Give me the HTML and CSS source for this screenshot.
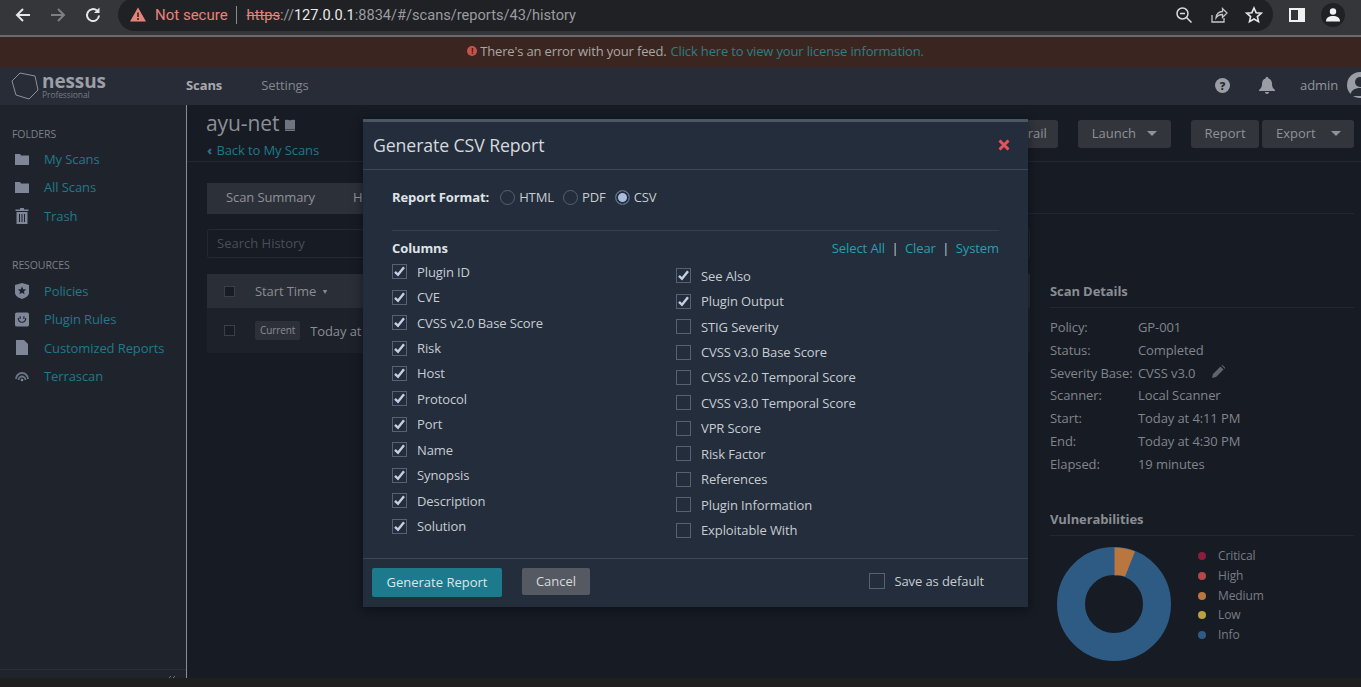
FILE: index.html

```html
<!DOCTYPE html>
<html lang="en">
<head>
  <meta charset="UTF-8">
  <title>Nessus - Scan History</title>
  <link rel="stylesheet" href="styles.css">
</head>
<body>
  <svg class="defs" width="0" height="0">
    <symbol id="tick" viewBox="0 0 15 15"><path d="M3 7.8l3 3 6-7.6" fill="none" stroke="#c3cfe6" stroke-width="2.4"/></symbol>
    <symbol id="folder" viewBox="0 0 14 12"><path d="M0 2.4V1h5l1 1.4h8V12H0z" fill="#7e8698"/></symbol>
  </svg>

  <div class="chrome">
    <svg class="chrome-icon" width="18" height="18" viewBox="0 0 18 18"><path d="M16 9H3M9 3L3 9l6 6" fill="none" stroke="#e4e6e8" stroke-width="2"/></svg>
    <svg class="chrome-icon" width="18" height="18" viewBox="0 0 18 18"><path d="M2 9h13M9 3l6 6-6 6" fill="none" stroke="#7d7f83" stroke-width="2"/></svg>
    <svg class="chrome-icon" width="18" height="18" viewBox="0 0 18 18"><path d="M15 9.5A6 6 0 1 1 13 4.6" fill="none" stroke="#e4e6e8" stroke-width="2"/><path d="M15.5 1.5V7h-5.5z" fill="#e4e6e8"/></svg>
    <div class="omnibox">
      <svg width="16" height="15" viewBox="0 0 16 15"><path d="M8 .5l8 14H0z" fill="#e8837a"/><path d="M8 5.5v4.5M8 11v2" stroke="#202124" stroke-width="1.5"/></svg>
      <span class="not-secure">Not secure</span>
      <span class="url"><s>https</s>://<b>127.0.0.1</b>:8834/#/scans/reports/43/history</span>
      <span class="omni-icons">
        <svg width="18" height="18" viewBox="0 0 18 18"><circle cx="7.5" cy="7.5" r="5.5" fill="none" stroke="#d8dadc" stroke-width="1.5"/><path d="M5 7.5h5M11.5 11.5l5 5" stroke="#d8dadc" stroke-width="1.5"/></svg>
        <svg width="18" height="18" viewBox="0 0 18 18"><path d="M2 9v7h12v-4M6 12c0-4 3-6.5 6.5-6.5V2.500L17 7l-4.500 4.500v-3C9.500 8.500 7.500 9.500 6 12z" fill="none" stroke="#c4c6c8" stroke-width="1.3"/></svg>
        <svg width="18" height="18" viewBox="0 0 18 18"><path d="M9 2l2.1 4.7 5.1.5-3.8 3.4 1.1 5L9 13l-4.5 2.6 1.100-5-3.800-3.400 5.100-.5z" fill="none" stroke="#e4e6e8" stroke-width="1.6"/></svg>
      </span>
    </div>
    <svg class="side-panel" width="16" height="16" viewBox="0 0 16 16"><path d="M0 1h16v14H0z" fill="#f0f1f2"/><path d="M2 3h7v10H2z" fill="#35363a"/></svg>
    <span class="profile"><svg width="14" height="14" viewBox="0 0 14 14"><circle cx="7" cy="3.5" r="3.2" fill="#f2f2f2"/><path d="M0 13.5c0-4 3-5.5 7-5.5s7 1.5 7 5.5z" fill="#f2f2f2"/></svg></span>
  </div>

  <div class="banner">
    <span class="banner-dot">!</span>
    <span>There's an error with your feed.</span>
    <a href="#">Click here to view your license information.</a>
  </div>

  <nav class="topnav">
    <div class="logo">
      <svg width="28" height="30" viewBox="0 0 28 30"><path d="M9 2l15 3 3 14-9 9-13-4L1 10z" fill="none" stroke="#8b9099" stroke-width="1"/></svg>
      <div class="logo-text">
        <span class="logo-name">nessus</span>
        <span class="logo-sub">Professional</span>
      </div>
    </div>
    <a class="nav-link active" href="#">Scans</a>
    <a class="nav-link" href="#">Settings</a>
    <div class="nav-right">
      <span class="help">?</span>
      <svg class="bell" width="16" height="17" viewBox="0 0 16 17"><path d="M8 0c1 0 1.500.7 1.500 1.500C12 2.300 13 4.500 13 7c0 3 1 4.500 3 6v1H0v-1c2-1.500 3-3 3-6 0-2.500 1-4.700 3.500-5.500C6.500.7 7 0 8 0zM6 15h4c0 1.200-1 2-2 2s-2-.8-2-2z" fill="#9a9ea4"/></svg>
      <span class="user">admin</span>
      <span class="avatar"><svg width="26" height="26" viewBox="0 0 26 26"><circle cx="13" cy="10" r="5" fill="#272c36"/><path d="M3 24c1-6 5-8 10-8s9 2 10 8z" fill="#272c36"/></svg></span>
    </div>
  </nav>

  <div class="app">
    <aside class="sidebar">
      <h4 class="side-title">Folders</h4>
      <a class="side-link" href="#"><svg width="14" height="12"><use href="#folder"/></svg>My Scans</a>
      <a class="side-link" href="#"><svg width="14" height="12"><use href="#folder"/></svg>All Scans</a>
      <a class="side-link" href="#"><svg width="14" height="16" viewBox="0 0 14 16"><path d="M5 0h4v1.5h4.500V3H.5V1.500H5zM1.500 4h11v12h-11z" fill="#7e8698"/><path d="M4.500 6v8M7 6v8M9.500 6v8" stroke="#1f232c"/></svg>Trash</a>

      <h4 class="side-title second">Resources</h4>
      <a class="side-link" href="#"><svg width="14" height="16" viewBox="0 0 14 16"><path d="M7 0l7 2v8c0 3-4 5-7 6-3-1-7-3-7-6V2z" fill="#7e8698"/><path d="M7 3.500l1.200 2.700 2.900.3-2.200 1.900.7 2.900L7 9.800l-2.600 1.500.7-2.900-2.200-1.900 2.900-.3z" fill="#1f232c"/></svg>Policies</a>
      <a class="side-link" href="#"><svg width="15" height="15" viewBox="0 0 15 15"><rect width="15" height="15" rx="2" fill="#7e8698"/><path d="M3.500 6c0 6 8 6 8 0" fill="none" stroke="#1f232c" stroke-width="1.200"/><path d="M5.500 4v3M9.500 4v3" stroke="#1f232c" stroke-width="1.200"/></svg>Plugin Rules</a>
      <a class="side-link" href="#"><svg width="12" height="15" viewBox="0 0 12 15"><path d="M0 0h8l4 4v11H0z" fill="#7e8698"/></svg>Customized Reports</a>
      <a class="side-link" href="#"><svg width="14" height="14" viewBox="0 0 14 14"><path d="M1 10a6 6 0 1 1 12 0M3.500 11a3.500 3.500 0 1 1 7 0" fill="none" stroke="#6d7484" stroke-width="1.800"/><circle cx="7" cy="11" r="1.300" fill="#7e8698"/></svg>Terrascan</a>
      <div class="side-foot"><svg width="9" height="6" viewBox="0 0 9 6"><path d="M4 0L1 3l3 3M8 0L5 3l3 3" fill="none" stroke="#6f7278"/></svg></div>
    </aside>

    <main class="main">
      <header class="page-head">
        <div>
          <h1 class="scan-name">ayu-net <svg width="12" height="12" viewBox="0 0 12 12"><path d="M1 1c2-.6 4-.4 5 .5 1-.9 3-1.100 5-.5v9H1z" fill="#6f7480"/><path d="M1 10.500h10V12H1z" fill="#6f7480"/></svg></h1>
          <a class="back" href="#"><span class="back-mark">‹</span> Back to My Scans</a>
        </div>
        <div class="actions">
          <button class="btn audit">Audit Trail</button>
          <button class="btn launch">Launch <i class="caret"></i></button>
          <div class="btn-pair">
            <button class="btn report">Report</button>
            <button class="btn export">Export <i class="caret"></i></button>
          </div>
        </div>
      </header>

      <div class="tabs">
        <a class="tab" href="#">Scan Summary</a>
        <a class="tab" href="#">H</a>
      </div>

      <div class="columns">
        <section class="history">
          <input class="search" type="text" placeholder="Search History">
          <div class="table">
            <div class="thead">
              <span class="cell-box"></span>
              <span>Start Time <small>▼</small></span>
            </div>
            <div class="trow">
              <span class="cell-box"></span>
              <span class="tag">Current</span>
              <span>Today at</span>
            </div>
          </div>
        </section>

        <aside class="details">
          <h3 class="details-title">Scan Details</h3>
          <dl class="info">
            <dt>Policy:</dt><dd>GP-001</dd>
            <dt>Status:</dt><dd>Completed</dd>
            <dt>Severity Base:</dt>
            <dd>CVSS v3.0 <svg class="pencil" width="13" height="13" viewBox="0 0 13 13"><path d="M0 13l1-4 7.500-7.500 3 3L4 12zM9.500.5l1-.5 3 3-.5 1z" fill="#5f6570"/></svg></dd>
            <dt>Scanner:</dt><dd>Local Scanner</dd>
            <dt>Start:</dt><dd>Today at 4:11 PM</dd>
            <dt>End:</dt><dd>Today at 4:30 PM</dd>
            <dt>Elapsed:</dt><dd>19 minutes</dd>
          </dl>

          <h3 class="details-title vuln">Vulnerabilities</h3>
          <div class="chart">
            <svg width="114" height="114" viewBox="0 0 114 114">
              <circle cx="57" cy="57" r="43" fill="none" stroke="#2d5b84" stroke-width="28"/>
              <path d="M57.500 0.500A56.500 56.500 0 0 1 78 4.500L68 29.500A28 28 0 0 0 57.500 28.500z" fill="#b9773f"/>
            </svg>
            <ul class="legend">
              <li><i class="dot critical"></i>Critical</li>
              <li><i class="dot high"></i>High</li>
              <li><i class="dot medium"></i>Medium</li>
              <li><i class="dot low"></i>Low</li>
              <li><i class="dot info-dot"></i>Info</li>
            </ul>
          </div>
        </aside>
      </div>
    </main>
  </div>
  <div class="bottom-strip"></div>

  <div class="modal">
    <div class="modal-head">
      <h2>Generate CSV Report</h2>
      <svg width="12" height="12" viewBox="0 0 12 12"><path d="M1.500 1.500l9 9M10.500 1.500l-9 9" stroke="#e8505b" stroke-width="3"/></svg>
    </div>
    <div class="modal-body">
      <div class="format-row">
        <span class="format-label">Report Format:</span>
        <label class="radio"><i></i>HTML</label>
        <label class="radio"><i></i>PDF</label>
        <label class="radio on"><i></i>CSV</label>
      </div>
      <div class="col-head">
        <strong>Columns</strong>
        <span class="col-links"><a href="#">Select All</a><em>|</em><a href="#">Clear</a><em>|</em><a href="#">System</a></span>
      </div>
      <div class="col-lists">
        <ul class="col-list left">
          <li><span class="box"><svg width="15" height="15"><use href="#tick"/></svg></span>Plugin ID</li>
          <li><span class="box"><svg width="15" height="15"><use href="#tick"/></svg></span>CVE</li>
          <li><span class="box"><svg width="15" height="15"><use href="#tick"/></svg></span>CVSS v2.0 Base Score</li>
          <li><span class="box"><svg width="15" height="15"><use href="#tick"/></svg></span>Risk</li>
          <li><span class="box"><svg width="15" height="15"><use href="#tick"/></svg></span>Host</li>
          <li><span class="box"><svg width="15" height="15"><use href="#tick"/></svg></span>Protocol</li>
          <li><span class="box"><svg width="15" height="15"><use href="#tick"/></svg></span>Port</li>
          <li><span class="box"><svg width="15" height="15"><use href="#tick"/></svg></span>Name</li>
          <li><span class="box"><svg width="15" height="15"><use href="#tick"/></svg></span>Synopsis</li>
          <li><span class="box"><svg width="15" height="15"><use href="#tick"/></svg></span>Description</li>
          <li><span class="box"><svg width="15" height="15"><use href="#tick"/></svg></span>Solution</li>
        </ul>
        <ul class="col-list right">
          <li><span class="box"><svg width="15" height="15"><use href="#tick"/></svg></span>See Also</li>
          <li><span class="box"><svg width="15" height="15"><use href="#tick"/></svg></span>Plugin Output</li>
          <li><span class="box"></span>STIG Severity</li>
          <li><span class="box"></span>CVSS v3.0 Base Score</li>
          <li><span class="box"></span>CVSS v2.0 Temporal Score</li>
          <li><span class="box"></span>CVSS v3.0 Temporal Score</li>
          <li><span class="box"></span>VPR Score</li>
          <li><span class="box"></span>Risk Factor</li>
          <li><span class="box"></span>References</li>
          <li><span class="box"></span>Plugin Information</li>
          <li><span class="box"></span>Exploitable With</li>
        </ul>
      </div>
    </div>
    <div class="modal-foot">
      <button class="btn-primary">Generate Report</button>
      <button class="btn-cancel">Cancel</button>
      <label class="save-default"><span class="box"></span>Save as default</label>
    </div>
  </div>
</body>
</html>
```

FILE: styles.css

```css
* {
  box-sizing: border-box;
}

body {
  margin: 0;
  height: 687px;
  overflow: hidden;
  position: relative;
  font-family: "Open Sans", "Liberation Sans", sans-serif;
  font-size: 13px;
  letter-spacing: -.1px;
  background: #161b24;
  color: #8f939a;
}

a {
  text-decoration: none;
}

ul {
  list-style: none;
  margin: 0;
  padding: 0;
}

.defs {
  position: absolute;
}

/* browser bar */
.chrome {
  height: 37px;
  display: flex;
  align-items: flex-start;
  padding-left: 14px;
  background: #35363a;
  border-bottom: 2px solid #6b6b6b;
  overflow: hidden;
}

.chrome-icon {
  margin: 6px 17px 0 0;
}

.omnibox {
  width: 1155px;
  height: 33px;
  margin: -2px 0 0 -1px;
  padding: 0 10px 0 12px;
  display: flex;
  align-items: center;
  border-radius: 17px;
  background: #202124;
  letter-spacing: 0;
}

.not-secure {
  margin-left: 9px;
  padding-right: 8px;
  border-right: 1px solid #8a8b8d;
  color: #e8837a;
  font-family: "Roboto", sans-serif;
  font-size: 15px;
  line-height: 18px;
}

.url {
  margin-left: 10px;
  color: #9a9ca0;
  font-family: "Roboto", sans-serif;
  font-size: 14.6px;
}

.url s {
  color: #e8837a;
}

.url b {
  color: #e8eaed;
  font-weight: 400;
}

.omni-icons {
  margin-left: auto;
  display: flex;
  gap: 17px;
}

.side-panel {
  margin: 7px 0 0 16px;
}

.profile {
  width: 24px;
  height: 24px;
  margin: 3px 0 0 16px;
  display: flex;
  align-items: center;
  justify-content: center;
  border-radius: 50%;
  background: #202124;
}

/* feed warning */
.banner {
  height: 30px;
  padding: 0 0 2px 30px;
  display: flex;
  align-items: center;
  justify-content: center;
  gap: 4px;
  background: #3a2520;
  color: #a9a7a4;
  font-size: 13px;
  letter-spacing: -.15px;
}

.banner a {
  color: #2b8085;
}

.banner-dot {
  width: 10px;
  height: 10px;
  margin-right: -1px;
  border-radius: 50%;
  background: #c9524a;
  color: #3a2520;
  font-size: 9px;
  font-weight: 700;
  line-height: 10px;
  text-align: center;
}

/* nessus nav */
.topnav {
  height: 38px;
  padding-left: 11px;
  display: flex;
  align-items: center;
  background: #272c36;
  overflow: hidden;
}

.logo {
  width: 175px;
  display: flex;
  align-items: center;
  gap: 3px;
}

.logo-text {
  display: flex;
  flex-direction: column;
}

.logo-name {
  color: #9b9fa6;
  font-size: 19px;
  font-weight: 700;
  line-height: 17px;
}

.logo-sub {
  color: #777b83;
  font-size: 8.5px;
  line-height: 10px;
}

.nav-link {
  margin: 0 39px 2px 0;
  color: #83878e;
  font-size: 13px;
}

.nav-link.active {
  color: #a6a9ae;
  font-weight: 700;
}

.nav-right {
  margin: 0 0 2px auto;
  display: flex;
  align-items: center;
}

.help {
  width: 15px;
  height: 15px;
  border-radius: 50%;
  background: #9a9ea4;
  color: #272c36;
  font-size: 11px;
  font-weight: 800;
  line-height: 15px;
  text-align: center;
}

.bell {
  margin-left: 29px;
}

.user {
  margin-left: 25px;
  color: #92969c;
  font-size: 13px;
}

.avatar {
  width: 26px;
  height: 26px;
  margin: 0 -12px 0 9px;
  border-radius: 50%;
  background: #9a9ea4;
}

/* page body */
.app {
  height: 573px;
  display: flex;
}

.sidebar {
  width: 187px;
  flex: none;
  position: relative;
  padding-top: 22px;
  background: #1f232c;
  border-right: 1px solid #8a8d92;
}

.side-title {
  margin: 0 0 4px 12px;
  color: #7c8087;
  font-size: 10.5px;
  font-weight: 400;
  line-height: 14px;
  text-transform: uppercase;
}

.side-title.second {
  margin: 28px 0 5px 12px;
}

.side-link {
  height: 28.3px;
  display: flex;
  align-items: center;
  color: #21798a;
}

.side-link svg {
  width: 14px;
  margin: 0 15px;
}

.side-foot {
  position: absolute;
  left: 0;
  right: 0;
  bottom: 0;
  height: 9px;
  padding: 6px 10px 0 0;
  border-top: 1px solid #2a2f38;
  overflow: hidden;
  text-align: right;
}

.side-foot svg {
  display: inline-block;
  vertical-align: top;
}

.main {
  flex: 1;
  min-width: 0;
}

.page-head {
  height: 57px;
  padding: 5px 7px 0 19px;
  display: flex;
  justify-content: space-between;
  border-bottom: 1px solid #222732;
}

.scan-name {
  margin: 0;
  color: #8d9096;
  font-size: 21px;
  font-weight: 400;
  line-height: 26px;
}

.scan-name svg {
  margin-left: -1px;
}

.back {
  display: block;
  margin-top: 5px;
  padding-left: 1px;
  color: #21798a;
  font-size: 13px;
}

.back-mark {
  margin-right: 1px;
  font-weight: 800;
}

.actions {
  display: flex;
  align-items: flex-start;
  gap: 20px;
  padding-top: 10px;
}

.btn {
  height: 28px;
  padding: 0 0 2px;
  border: 0;
  border-radius: 3px;
  background: #32353c;
  color: #8f9298;
  font: 13px "Open Sans", sans-serif;
  white-space: nowrap;
}

.btn-pair {
  display: flex;
  gap: 3px;
}

.audit {
  width: 90px;
  padding-left: 6px;
}

.launch {
  width: 93px;
}

.report {
  width: 68px;
}

.export {
  width: 92px;
  padding-left: 14px;
  text-align: left;
}

.caret {
  display: inline-block;
  margin: 0 0 2px 8px;
  border: 5px solid transparent;
  border-top-color: #8f9298;
  border-bottom: 0;
}

.export .caret {
  margin-left: 12px;
}

.tabs {
  height: 52px;
  margin: 0 7px 0 20px;
  padding-top: 21px;
  display: flex;
  border-bottom: 1px solid #222732;
}

.tab {
  height: 31px;
  padding: 0 19px;
  background: #2c3038;
  color: #8f9298;
  line-height: 29px;
}

.tab + .tab {
  flex: 0 0 686px;
}

.columns {
  display: flex;
  margin-left: 20px;
}

.history {
  width: 823px;
  flex: none;
  padding-top: 15px;
}

.search {
  width: 100%;
  height: 29px;
  padding: 0 9px 2px;
  border: 1px solid #232832;
  border-radius: 2px;
  background: transparent;
  font: 13px "Open Sans", sans-serif;
}

.search::placeholder {
  color: #4a4e56;
}

.table {
  margin-top: 16px;
}

.thead,
.trow {
  display: flex;
  align-items: center;
  padding-left: 17px;
  color: #8a8d93;
}

.thead {
  height: 34px;
  background: #2a2e37;
}

.thead small {
  font-size: 7px;
  vertical-align: 2px;
  margin-left: 2px;
}

.trow {
  height: 45px;
  background: #1c212a;
}

.cell-box {
  width: 11px;
  height: 11px;
  margin-right: 20px;
  border: 1px solid #3a3f49;
  background: #181c25;
}

.tag {
  height: 19px;
  margin-right: 10px;
  padding: 0 5px;
  border-radius: 2px;
  background: #2c3038;
  font-size: 10px;
  line-height: 18px;
}

.details {
  width: 304px;
  margin-left: 20px;
  padding-top: 68px;
}

.details-title {
  margin: 0 0 8px;
  padding-bottom: 7px;
  border-bottom: 1px solid #222732;
  color: #8a8d93;
  font-size: 13px;
  font-weight: 700;
  line-height: 18px;
}

.info {
  display: grid;
  grid-template-columns: 88px 1fr;
  grid-auto-rows: 22.8px;
  margin: 0;
  color: #81858b;
  line-height: 22px;
}

.info dd {
  margin: 0;
}

.pencil {
  margin-left: 13px;
}

.vuln {
  margin-top: 34px;
}

.chart {
  display: flex;
  margin: 11px 0 0 7px;
  gap: 27px;
}

.legend {
  color: #797d84;
  font-size: 12px;
}

.legend li {
  height: 19.6px;
  display: flex;
  align-items: center;
  line-height: 18px;
}

.dot {
  width: 8px;
  height: 8px;
  margin-right: 12px;
  border-radius: 50%;
}

.critical { background: #8c1d3c; }
.high { background: #b4474a; }
.medium { background: #b9773f; }
.low { background: #b9a23f; }
.info-dot { background: #2d5b84; }

.bottom-strip {
  height: 9px;
  background: #1f1f1f;
}

/* dialog */
.modal {
  position: absolute;
  left: 363px;
  top: 119px;
  width: 665px;
  height: 488px;
  border-top: 3px solid #4a5666;
  background: #232d3b;
  box-shadow: 0 2px 10px rgba(0, 0, 0, .45);
  color: #c8ccd2;
}

.modal-head {
  height: 48px;
  padding: 0 18px 2px 10px;
  display: flex;
  align-items: center;
  justify-content: space-between;
  border-bottom: 1px solid #3d4755;
}

.modal-head h2 {
  margin: 0;
  color: #d6d9dd;
  font-size: 17.7px;
  font-weight: 400;
}

.modal-body {
  height: 388px;
  padding: 0 29px;
}

.format-row {
  height: 61px;
  padding-bottom: 6px;
  display: flex;
  align-items: center;
  border-bottom: 1px solid #333d4b;
}

.format-label {
  margin-right: 11px;
  color: #dfe2e6;
  font-weight: 700;
}

.radio {
  display: flex;
  align-items: center;
  margin-right: 9px;
  gap: 4px;
}

.radio i {
  width: 15px;
  height: 15px;
  border: 1px solid #566172;
  border-radius: 50%;
}

.radio.on i {
  background: #a9bce0;
  box-shadow: inset 0 0 0 2px #232d3b;
}

.col-head {
  padding-top: 8px;
  display: flex;
  justify-content: space-between;
}

.col-head strong {
  color: #dfe2e6;
  font-weight: 700;
}

.col-links a {
  color: #2b9db3;
}

.col-links em {
  margin: 0 6.5px;
  color: #c8ccd2;
  font-style: normal;
}

.col-lists {
  display: flex;
}

.col-list li {
  height: 25.45px;
  display: flex;
  align-items: center;
}

.col-list.left {
  width: 284px;
  margin-top: 2px;
}

.col-list.right {
  margin-top: 6px;
}

.box {
  width: 15px;
  height: 15px;
  margin-right: 10px;
  flex: none;
  border: 1px solid #566172;
  display: block;
}

.box svg {
  display: block;
  margin: -1px;
}

.modal-foot {
  height: 49px;
  padding: 9px 44px 0 9px;
  display: flex;
  align-items: flex-start;
  border-top: 1px solid #3d4755;
}

.btn-primary {
  width: 130px;
  height: 29px;
  padding: 0 0 2px;
  border: 0;
  border-radius: 2px;
  background: #1d7a8c;
  color: #dce6ea;
  font: 13px "Open Sans", sans-serif;
}

.btn-cancel {
  width: 68px;
  height: 27px;
  margin-left: 20px;
  padding: 0 0 2px;
  border: 0;
  border-radius: 2px;
  background: #555962;
  color: #d8dade;
  font: 13px "Open Sans", sans-serif;
}

.save-default {
  margin: 4px 0 0 auto;
  display: flex;
  align-items: center;
  color: #c8ccd2;
}

.save-default .box {
  width: 16px;
  height: 16px;
  margin-right: 9px;
}
```
